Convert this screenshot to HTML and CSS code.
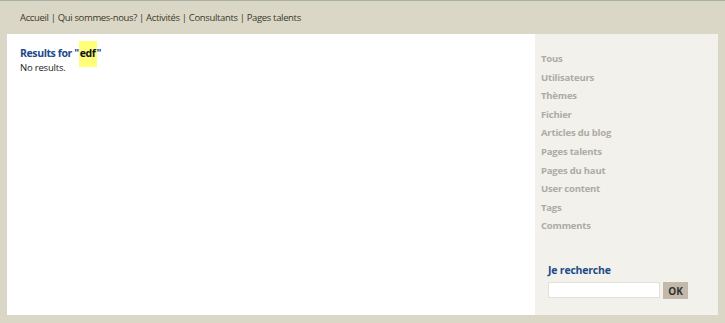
FILE: index.html
```
<!DOCTYPE html>
<html lang="fr">
<head>
    <meta charset="UTF-8">
    <title>Recherche</title>
    <link rel="stylesheet" href="styles.css">
</head>
<body>
<div class="topline"></div>
<div class="nav">
    <a href="#">Accueil</a> | <a href="#">Qui sommes-nous?</a> | <a href="#">Activités</a> | <a href="#">Consultants</a> | <a href="#">Pages talents</a>
</div>
<div class="page">
    <div class="main">
        <h2 class="results-title">Results for "<span class="hl">edf</span>"</h2>
        <p class="empty">No results.</p>
    </div>
    <div class="sidebar">
        <ul class="filters">
            <li>Tous</li>
            <li>Utilisateurs</li>
            <li>Thèmes</li>
            <li>Fichier</li>
            <li>Articles du blog</li>
            <li>Pages talents</li>
            <li>Pages du haut</li>
            <li>User content</li>
            <li>Tags</li>
            <li>Comments</li>
        </ul>
        <div class="search-box">
            <h3>Je recherche</h3>
            <div class="search-row">
                <input type="text">
                <button type="button">OK</button>
            </div>
        </div>
    </div>
</div>
</body>
</html>
```

FILE: styles.css
```
body {
    margin: 0;
    background-color: #dad7c6;
    font-family: "Open Sans", "DejaVu Sans", sans-serif;
    font-size: 9.5px;
    letter-spacing: -0.2px;
    color: #222;
}
.topline {
    height: 1px;
    background-color: #a9b1a5;
}
.nav {
    height: 33px;
    line-height: 33px;
    padding-left: 20px;
    color: #3b3a2a;
    letter-spacing: -0.35px;
}
.nav a {
    color: #3b3a2a;
    text-decoration: none;
}
.page {
    display: flex;
    margin: 0 7px;
    height: 281px;
}
.main {
    flex: 1;
    background-color: #fff;
    padding: 10px 13px;
}
.results-title {
    margin: 0;
    font-size: 10.5px;
    letter-spacing: -0.4px;
    color: #1c4a8a;
    line-height: 14px;
    padding-top: 2px;
}
.hl {
    display: inline-block;
    background-color: #ffff7a;
    color: #111;
    padding: 5px 1px 7px;
    margin: -5px 0 -7px;
}
.empty {
    margin: 1px 0 0;
}
.sidebar {
    width: 183px;
    background-color: #f2f1ec;
    display: flex;
    flex-direction: column;
}
.filters {
    list-style: none;
    margin: 0;
    padding: 16px 0 0 6px;
}
.filters li {
    font-weight: bold;
    color: #adaba5;
    line-height: 18.6px;
}
.search-box {
    margin-top: auto;
    padding: 0 0 16px 13px;
}
.search-box h3 {
    margin: 0 0 5px;
    font-size: 10.5px;
    color: #1c4a8a;
}
.search-row {
    display: flex;
    gap: 3px;
}
.search-row input {
    width: 112px;
    height: 16px;
    box-sizing: border-box;
    border: 1px solid #e2e0d8;
    background: #fff;
    padding: 0 3px;
}
.search-row button {
    height: 17px;
    width: 25px;
    padding: 0;
    border: none;
    background-color: #c2b9aa;
    color: #333;
    font-family: inherit;
    font-weight: bold;
    font-size: 10px;
}
```
